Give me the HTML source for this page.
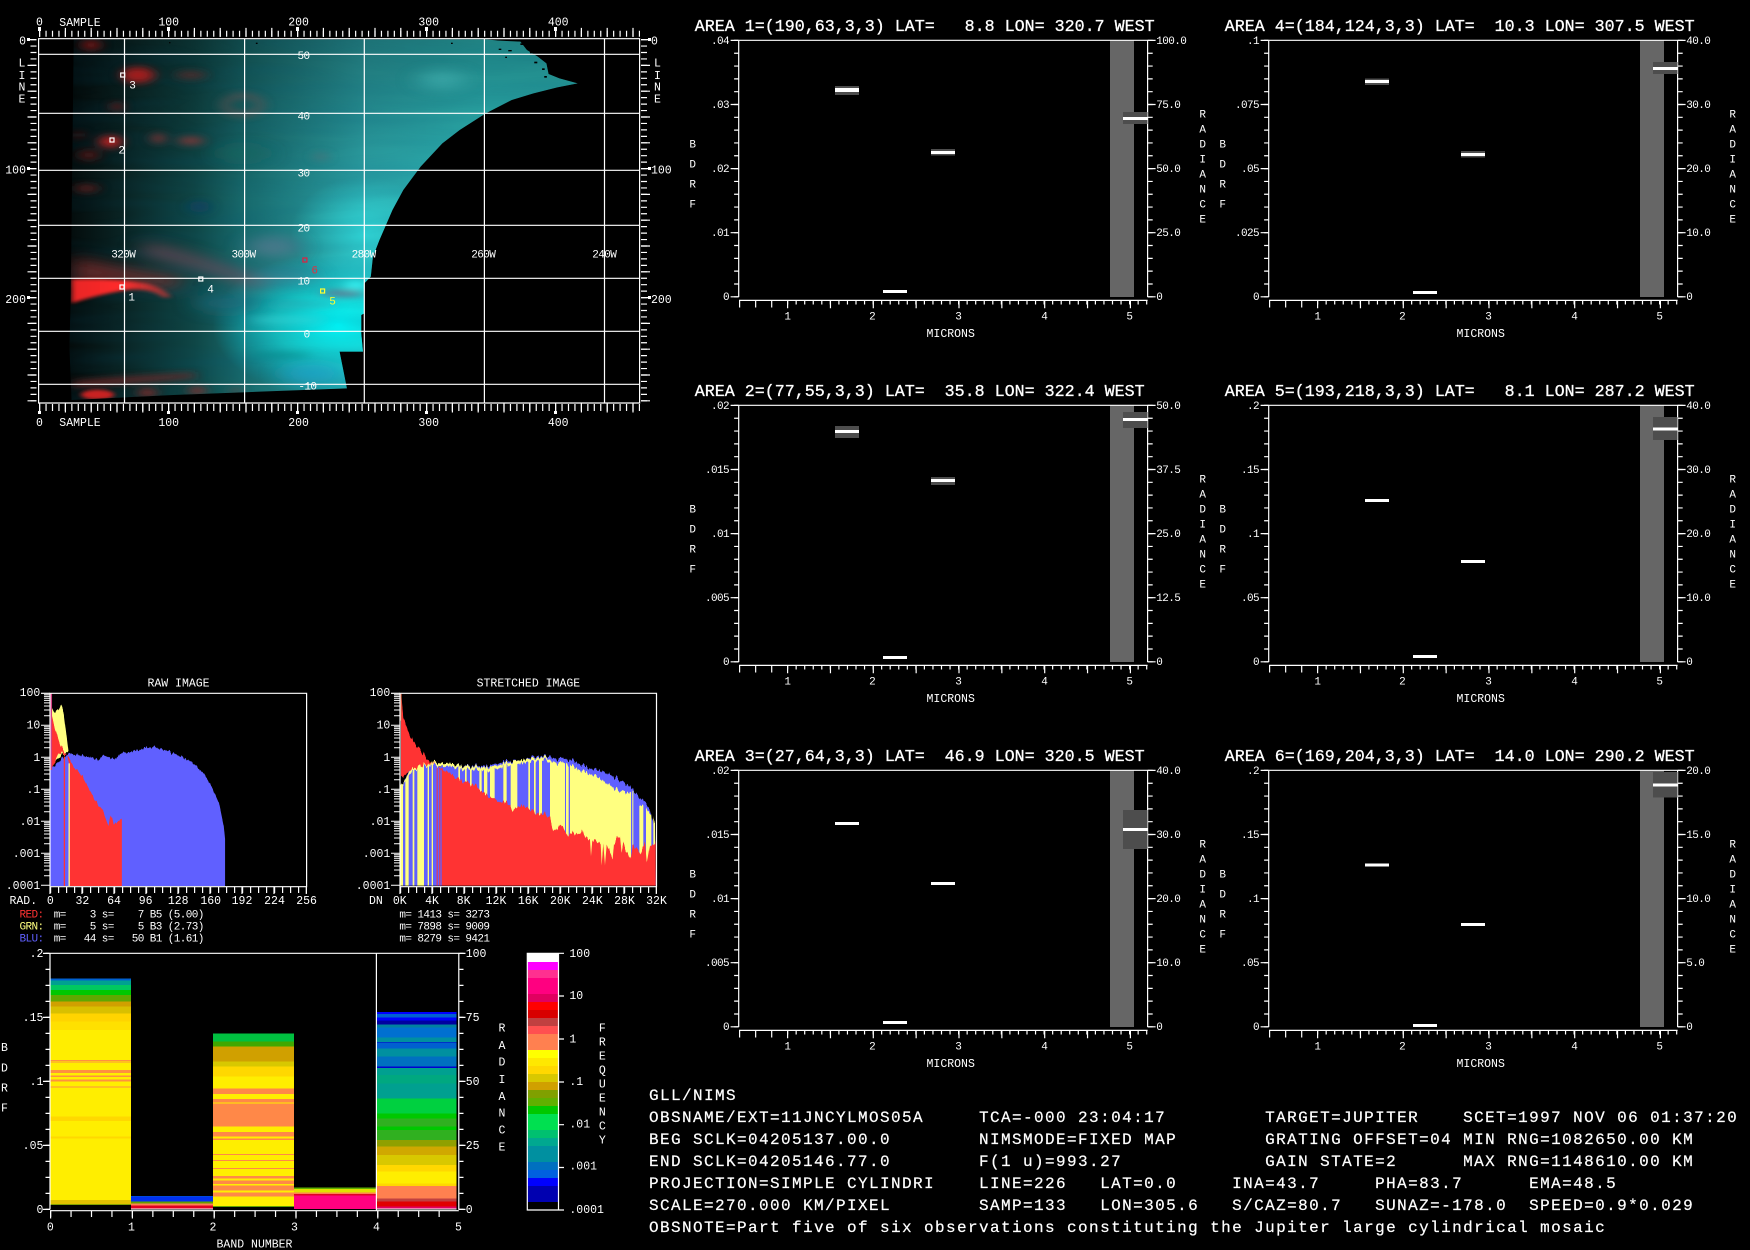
<!DOCTYPE html>
<html><head><meta charset="utf-8"><title>GLL/NIMS</title>
<style>
html,body{margin:0;padding:0;background:#000;width:1750px;height:1250px;overflow:hidden}
svg{display:block}
text{font-family:"Liberation Mono","DejaVu Sans Mono",monospace;fill:#fff;white-space:pre}
.s text,text.s{font-size:11px;letter-spacing:-.6px}
.m text,text.m{font-size:11.5px}
.t text{font-size:16.67px;stroke:#fff;stroke-width:.3px}
.n text{font-size:16px;letter-spacing:1.4px;stroke:#fff;stroke-width:.2px}
.e{text-anchor:end}.c{text-anchor:middle}
.w{stroke:#fff;fill:none}
</style></head><body>
<svg xmlns="http://www.w3.org/2000/svg" width="1750" height="1250" viewBox="0 0 1750 1250">
<defs>
<linearGradient id="gx" gradientUnits="userSpaceOnUse" x1="160" x2="1120" y1="0" y2="0">
<stop offset="0" stop-color="#040c0c"/><stop offset=".14" stop-color="#0a2626"/><stop offset=".3" stop-color="#0f4646"/><stop offset=".42" stop-color="#186a6c"/><stop offset=".7" stop-color="#2ca4a8"/><stop offset="1" stop-color="#2ebcbc"/></linearGradient>
<linearGradient id="gy" gradientUnits="userSpaceOnUse" x1="0" x2="0" y1="118" y2="600">
<stop offset="0" stop-color="#000" stop-opacity=".3"/><stop offset="1" stop-color="#000" stop-opacity="0"/></linearGradient>
<radialGradient id="gc" gradientUnits="userSpaceOnUse" cx="0" cy="0" r="1" gradientTransform="translate(780,975) scale(290,220)">
<stop offset="0" stop-color="#00ffff" stop-opacity=".98"/><stop offset=".5" stop-color="#10e8e8" stop-opacity=".6"/><stop offset="1" stop-color="#00d8f0" stop-opacity="0"/></radialGradient>
<radialGradient id="gb" gradientUnits="userSpaceOnUse" cx="0" cy="0" r="1" gradientTransform="translate(840,700) scale(170,170)">
<stop offset="0" stop-color="#30e8e8" stop-opacity=".7"/><stop offset="1" stop-color="#30e8e8" stop-opacity="0"/></radialGradient>
<clipPath id="mapc"><path d="M170 118L1120 118L1150 122L1200 125L1215 150L1240 170L1260 190L1265 222L1290 235L1332 250L1285 262L1230 280L1180 300L1120 340L1060 390L1020 430L970 500L930 570L905 630L885 690L875 720L860 770L855 830L840 850L840 940L833 945L833 1000L837 1055L783 1055L800 1165L600 1175L400 1185L165 1200L160 1040L163 900Z"/></clipPath>
<filter id="b1" x="-5%" y="-5%" width="110%" height="110%"><feGaussianBlur stdDeviation="14 10"/></filter>
<filter id="b2" x="-5%" y="-5%" width="110%" height="110%"><feGaussianBlur stdDeviation="7 5"/></filter>
<filter id="b3" x="-5%" y="-5%" width="110%" height="110%"><feGaussianBlur stdDeviation="26 18"/></filter>
<filter id="tex" x="0" y="0" width="100%" height="100%"><feTurbulence type="fractalNoise" baseFrequency=".003 .02" numOctaves="2" seed="7"/><feColorMatrix values="0 0 0 0 0  0 0 0 0 .1  0 0 0 0 .2  1.3 0 0 0 -.45"/></filter>
<filter id="jagS" x="-5%" y="-5%" width="110%" height="110%" color-interpolation-filters="sRGB"><feTurbulence type="fractalNoise" baseFrequency=".13 .0005" numOctaves="2" seed="3" result="n"/><feColorMatrix in="n" values="1 0 0 0 0  0 0 0 0 .5  0 0 1 0 0  0 0 0 0 1" result="m"/><feDisplacementMap in="SourceGraphic" in2="m" scale="32" xChannelSelector="G" yChannelSelector="R"/></filter>
<filter id="jagR" x="-5%" y="-5%" width="110%" height="110%" color-interpolation-filters="sRGB"><feTurbulence type="fractalNoise" baseFrequency=".17 .0005" numOctaves="2" seed="9" result="n"/><feColorMatrix in="n" values="1 0 0 0 0  0 0 0 0 .5  0 0 1 0 0  0 0 0 0 1" result="m"/><feDisplacementMap in="SourceGraphic" in2="m" scale="24" xChannelSelector="G" yChannelSelector="R"/></filter>
<clipPath id="yc"><path d="M35 290L60 240L90 220L130 215L200 225L250 232L300 230L350 220L390 210L430 205L470 200L480 215L530 220L560 235L620 260L680 300L720 310L745 305L748 345L780 365L795 395L797 605L30 605L30 290Z"/></clipPath>
<clipPath id="hs"><rect x="0" y="0" width="830" height="587"/></clipPath>
<clipPath id="hr"><rect x="0" y="0" width="760" height="648"/></clipPath>
<linearGradient id="rs" gradientUnits="userSpaceOnUse" x1="165" x2="395" y1="0" y2="0"><stop offset="0" stop-color="#e82424"/><stop offset=".5" stop-color="#ff2c2c"/><stop offset=".72" stop-color="#c83030"/><stop offset="1" stop-color="#803838"/></linearGradient>
<g id="dec" class="w" stroke-width="1"><path d="M-6 1.4H0M-6 3.1H0M-6 5H0M-6 7.1H0M-6 9.6H0M-6 12.7H0M-6 16.7H0M-6 22.4H0M-9 32H0"/></g>
<g id="pf">
<rect x="1110" y="40.3" width="24" height="256.7" fill="#666"/>
<path class="w" stroke-width="1.2" d="M738.7 40.3H1147.6M738.7 40.3V297M1147.6 40.3V297M739 300.4H1147.6"/>
<g class="w">
<line x1="736.4" y1="39.8" x2="736.4" y2="298" stroke-width="4.6" stroke-dasharray="1.2 11.62"/>
<line x1="734.6" y1="39.8" x2="734.6" y2="298" stroke-width="8" stroke-dasharray="1.2 62.9"/>
<line x1="1150.2" y1="39.8" x2="1150.2" y2="298" stroke-width="5" stroke-dasharray="1.2 11.62"/>
<line x1="1151.6" y1="39.8" x2="1151.6" y2="298" stroke-width="8" stroke-dasharray="1.2 62.9"/>
<line x1="787" y1="302.5" x2="1148" y2="302.5" stroke-width="4" stroke-dasharray="1.2 7.35"/>
<line x1="787" y1="304.3" x2="1148" y2="304.3" stroke-width="8" stroke-dasharray="1.2 41.65"/>
<line x1="739" y1="304" x2="780" y2="304" stroke-width="7" stroke-dasharray="1.2 14.85"/>
</g>
<g class="s c">
<text x="787.4" y="319.7">1</text><text x="872.1" y="319.7">2</text><text x="958.2" y="319.7">3</text><text x="1044.3" y="319.7">4</text><text x="1129.4" y="319.7">5</text>
<text x="692.4" y="147.4">B</text><text x="692.4" y="167.4">D</text><text x="692.4" y="187.4">R</text><text x="692.4" y="207.4">F</text>
<text x="1202.4" y="117.4">R</text><text x="1202.4" y="132.4">A</text><text x="1202.4" y="147.4">D</text><text x="1202.4" y="162.4">I</text><text x="1202.4" y="177.4">A</text><text x="1202.4" y="192.4">N</text><text x="1202.4" y="207.4">C</text><text x="1202.4" y="222.4">E</text>
</g>
<text class="m c" x="950.7" y="337">MICRONS</text>
</g>
</defs>
<rect width="1750" height="1250" fill="#000"/>

<!-- map image -->
<g transform="scale(.43366,.33333)">
<g clip-path="url(#mapc)">
<rect x="150" y="110" width="1200" height="1100" fill="url(#gx)"/>
<rect x="150" y="110" width="1200" height="600" fill="url(#gy)"/>
<rect x="150" y="500" width="1200" height="710" fill="url(#gc)"/>
<rect x="150" y="450" width="1200" height="500" fill="url(#gb)"/>
<rect x="150" y="110" width="1200" height="1100" filter="url(#tex)" opacity=".22"/>
<g filter="url(#b3)">
<path d="M170 770Q300 810 420 830L400 870Q280 840 170 850Z" fill="#7c2c2c" opacity=".75"/>
<path d="M330 725Q450 755 620 845L600 870Q450 800 330 765Z" fill="#784858" opacity=".7"/>
<ellipse cx="560" cy="460" rx="60" ry="22" fill="#1a6a60" opacity=".7"/>
<ellipse cx="520" cy="910" rx="70" ry="28" fill="#1a6a7a" opacity=".7"/>
<ellipse cx="630" cy="740" rx="60" ry="30" fill="#587a90" opacity=".75"/>
<ellipse cx="650" cy="830" rx="80" ry="24" fill="#3a7a90" opacity=".6"/>
<ellipse cx="1020" cy="240" rx="55" ry="25" fill="#48b8b8" opacity=".6"/>
<ellipse cx="720" cy="1120" rx="70" ry="26" fill="#20a0c8" opacity=".75"/>
</g>
<g filter="url(#b1)">
<ellipse cx="650" cy="1065" rx="70" ry="7" fill="#108080" opacity=".7"/>
<ellipse cx="660" cy="960" rx="90" ry="8" fill="#40e0e0" opacity=".6"/>
<ellipse cx="700" cy="915" rx="80" ry="7" fill="#30a8b0" opacity=".6"/>
<ellipse cx="460" cy="620" rx="24" ry="18" fill="#0a4060" opacity=".85"/>
<ellipse cx="740" cy="470" rx="14" ry="12" fill="#507078" opacity=".8"/>
<ellipse cx="318" cy="225" rx="38" ry="24" fill="#a01c1c"/>
<ellipse cx="210" cy="135" rx="22" ry="16" fill="#701818"/>
<ellipse cx="440" cy="225" rx="36" ry="12" fill="#5c2a2a" opacity=".8"/>
<ellipse cx="270" cy="320" rx="13" ry="12" fill="#701c1c"/>
<ellipse cx="255" cy="425" rx="26" ry="18" fill="#b82020"/>
<ellipse cx="365" cy="415" rx="15" ry="15" fill="#7c3030"/>
<ellipse cx="440" cy="422" rx="30" ry="12" fill="#7c3838"/>
<ellipse cx="182" cy="405" rx="11" ry="9" fill="#581818"/>
<ellipse cx="205" cy="465" rx="24" ry="16" fill="#481818"/>
<ellipse cx="200" cy="565" rx="28" ry="11" fill="#581f1f"/>
<ellipse cx="560" cy="315" rx="42" ry="28" fill="none" stroke="#785050" stroke-width="12" opacity=".75"/>
<ellipse cx="340" cy="1178" rx="20" ry="12" fill="#8c2525"/>
<ellipse cx="455" cy="1172" rx="18" ry="12" fill="#8c2a2a"/>
<ellipse cx="545" cy="1172" rx="12" ry="9" fill="#604040"/>
<ellipse cx="790" cy="880" rx="50" ry="9" fill="#786080" opacity=".85"/>
<ellipse cx="820" cy="855" rx="26" ry="12" fill="#40ffff" opacity=".8"/>
<path d="M170 1145Q300 1130 450 1120L450 1132Q300 1150 170 1160Z" fill="#702525"/>
</g>
<g filter="url(#b2)">
<path d="M165 838Q260 835 340 850Q380 865 395 892L375 892Q350 865 300 868Q220 885 165 910Z" fill="url(#rs)"/>
<ellipse cx="225" cy="1184" rx="38" ry="15" fill="#c82020"/>
</g>
</g>
<!-- speckle on upper right -->
<g fill="#000"><rect x="1150" y="146" width="6" height="4"/><rect x="1172" y="150" width="8" height="4"/><rect x="1200" y="130" width="7" height="5"/><rect x="1212" y="140" width="6" height="4"/><rect x="1222" y="155" width="7" height="5"/><rect x="1232" y="185" width="7" height="5"/><rect x="1250" y="205" width="6" height="5"/><rect x="1255" y="228" width="6" height="5"/><rect x="1165" y="170" width="4" height="4"/><rect x="1040" y="128" width="4" height="4"/><rect x="590" y="128" width="4" height="4"/><rect x="390" y="126" width="3" height="4"/></g>
</g>

<!-- map frame & grid -->
<path class="w" stroke-width="1.2" d="M38.6 38.7H639.6V403H38.6ZM124.5 38.7V403M244.6 38.7V403M364.3 38.7V403M484.4 38.7V403M604.5 38.7V403M38.6 54.3H639.6M38.6 113.3H639.6M38.6 170.3H639.6M38.6 225.3H639.6M38.6 278.3H639.6M38.6 331.3H639.6M38.6 384.3H639.6"/>
<g class="w">
<line x1="39" y1="33.7" x2="640" y2="33.7" stroke-width="6" stroke-dasharray="1.2 5.25"/>
<line x1="39" y1="32.4" x2="640" y2="32.4" stroke-width="9" stroke-dasharray="1.2 24.6"/>
<line x1="39" y1="407.5" x2="640" y2="407.5" stroke-width="7" stroke-dasharray="1.2 5.25"/>
<line x1="39" y1="408" x2="640" y2="408" stroke-width="9" stroke-dasharray="1.2 24.6"/>
<line x1="33.5" y1="39" x2="33.5" y2="403" stroke-width="6" stroke-dasharray="1.2 5.25"/>
<line x1="32" y1="39" x2="32" y2="403" stroke-width="9" stroke-dasharray="1.2 24.6"/>
<line x1="644" y1="39" x2="644" y2="403" stroke-width="6" stroke-dasharray="1.2 5.25"/>
<line x1="645.5" y1="39" x2="645.5" y2="403" stroke-width="9" stroke-dasharray="1.2 24.6"/>
</g>
<g fill="#fff"><rect x="38" y="27" width="3" height="4"/><rect x="167" y="27" width="3" height="4"/><rect x="296" y="27" width="3" height="4"/><rect x="425" y="27" width="3" height="4"/><rect x="554" y="27" width="3" height="4"/>
<rect x="38" y="411" width="3" height="3"/><rect x="167" y="411" width="3" height="3"/><rect x="296" y="411" width="3" height="3"/><rect x="425" y="411" width="3" height="3"/><rect x="554" y="411" width="3" height="3"/>
<rect x="27" y="38" width="3" height="3"/><rect x="27" y="167" width="3" height="3"/><rect x="27" y="296" width="3" height="3"/><rect x="648" y="38" width="3" height="3"/><rect x="648" y="167" width="3" height="3"/><rect x="648" y="296" width="3" height="3"/></g>
<g class="m">
<text x="59.3" y="26">SAMPLE</text><text x="59.3" y="426">SAMPLE</text>
<g class="c">
<text x="39.5" y="25.5">0</text><text x="168.7" y="25.5">100</text><text x="298.6" y="25.5">200</text><text x="428.7" y="25.5">300</text><text x="558.2" y="25.5">400</text>
<text x="39.5" y="426">0</text><text x="168.7" y="426">100</text><text x="298.6" y="426">200</text><text x="428.7" y="426">300</text><text x="558.2" y="426">400</text>
<text x="22" y="66.5">L</text><text x="22" y="79">I</text><text x="22" y="90.5">N</text><text x="22" y="102.5">E</text>
<text x="657.4" y="66.5">L</text><text x="657.4" y="79">I</text><text x="657.4" y="90.5">N</text><text x="657.4" y="102.5">E</text>
</g>
<g class="e"><text x="26" y="44.5">0</text><text x="26" y="173.5">100</text><text x="26" y="303">200</text></g>
<text x="651" y="44.5">0</text><text x="651" y="173.5">100</text><text x="651" y="303">200</text>
</g>
<g class="s c">
<text x="303.5" y="59">50</text><text x="303.5" y="119.4">40</text><text x="303.5" y="176.4">30</text><text x="303.5" y="231.4">20</text><text x="303.5" y="284.4">10</text><text x="306.6" y="337.4">0</text><text x="307.4" y="389.4">-10</text>
<text x="123.3" y="257.4">320W</text><text x="243.5" y="257.4">300W</text><text x="363.6" y="257.4">280W</text><text x="483.3" y="257.4">260W</text><text x="604.3" y="257.4">240W</text>
<text x="131.4" y="300.6">1</text><text x="121.4" y="153.6">2</text><text x="132.3" y="88.6">3</text><text x="210.3" y="292.6">4</text>
<text x="332.2" y="304.6" style="fill:#ffff30">5</text><text x="314.4" y="273.6" style="fill:#e03040">6</text>
</g>
<g fill="none" stroke-width="1.2">
<rect x="120" y="285" width="4" height="4" stroke="#fff"/><rect x="110" y="138" width="4" height="4" stroke="#fff"/><rect x="120.7" y="73" width="4" height="4" stroke="#fff"/><rect x="198.8" y="277" width="4" height="4" stroke="#fff"/><rect x="320.6" y="289" width="4" height="4" stroke="#ffff30"/><rect x="302.9" y="258" width="4" height="4" stroke="#e02040"/>
</g>

<!-- RAW histogram -->
<g transform="translate(0,670) scale(.43366,.33333)">
<g clip-path="url(#hr)"><g filter="url(#jagR)">
<path fill="#6060ff" d="M115 670L115 300L122 290L160 250L190 258L230 268L240 255L265 268L280 250L320 240L350 230L370 235L400 250L440 272L470 310L490 355L505 400L516 470L519 510L519 670Z"/>
<path fill="#ffff80" d="M118 115L125 125L135 120L140 103L147 130L158 245L150 250L120 280Z"/>
<path fill="#ff3333" d="M118 130L128 180L140 230L158 262L170 290L190 320L210 370L240 430L250 465L255 432L262 462L275 455L281 445L281 670L160 670L160 290L155 255L135 250L118 300Z"/>
</g></g>
<rect x="115" y="70" width="5" height="230" fill="#d04080"/>
<rect x="147" y="260" width="3" height="388" fill="#ff3333"/>
<rect x="158" y="280" width="3" height="368" fill="#ffff90"/>
</g>
<path class="w" stroke-width="1.2" d="M50 693.3H306.6V886.7H50ZM50 886.7V894M82 886.7V894M114 886.7V894M146 886.7V894M178 886.7V894M210 886.7V894M242 886.7V894M274 886.7V894M306.3 886.7V894"/>
<line class="w" x1="50" y1="890" x2="307" y2="890" stroke-width="6" stroke-dasharray="1.2 6.8"/>
<use href="#dec" x="50" y="693.3"/><use href="#dec" x="50" y="725.3"/><use href="#dec" x="50" y="757.3"/><use href="#dec" x="50" y="789.3"/><use href="#dec" x="50" y="821.3"/><use href="#dec" x="50" y="853.3"/>
<path class="w" stroke-width="1.2" d="M41 693.3H50"/>

<!-- STRETCHED histogram -->
<g transform="translate(390,690) scale(.33333)">
<g clip-path="url(#hs)"><g filter="url(#jagS)">
<path fill="#6060ff" d="M30 605L35 290L60 235L90 220L120 215L150 228L200 225L250 230L300 225L350 215L400 210L430 200L470 198L490 205L515 205L550 212L600 235L640 245L680 265L720 290L745 320L780 355L795 430L798 605Z"/>
<g clip-path="url(#yc)" fill="#ffff80">
<rect x="30" y="0" width="9" height="605"/><rect x="46" y="0" width="10" height="605"/><rect x="68" y="0" width="5" height="605"/><rect x="82" y="0" width="20" height="605"/><rect x="113" y="0" width="4" height="605"/><rect x="125" y="0" width="4" height="605"/>
<rect x="205" y="0" width="5" height="605"/><rect x="225" y="0" width="5" height="605"/><rect x="240" y="0" width="5" height="605"/><rect x="268" y="0" width="7" height="605"/><rect x="282" y="0" width="10" height="605"/><rect x="300" y="0" width="14" height="605"/><rect x="340" y="0" width="10" height="605"/><rect x="362" y="0" width="20" height="605"/><rect x="415" y="0" width="5" height="605"/><rect x="432" y="0" width="5" height="605"/><rect x="447" y="0" width="9" height="605"/>
<rect x="480" y="0" width="45" height="605"/><rect x="528" y="0" width="8" height="605"/><rect x="540" y="0" width="183" height="605"/><rect x="727" y="0" width="3" height="605"/><rect x="748" y="0" width="12" height="605"/><rect x="768" y="0" width="16" height="605"/><rect x="790" y="0" width="8" height="605"/>
<path d="M30 290L60 240L90 220L130 215L200 225L250 232L300 230L350 220L390 210L430 205L470 200L480 215L480 224L470 208L430 214L390 220L350 229L300 240L250 242L200 234L130 224L90 230L60 250L30 300Z"/>
</g>
<path fill="#ff3333" d="M33 12L40 80L60 140L90 180L120 215L150 232L200 265L250 285L300 320L330 335L360 345L370 365L385 350L400 345L420 360L440 370L465 372L480 385L490 425L505 405L520 415L530 435L545 430L570 430L575 415L582 440L600 445L603 495L607 450L632 462L635 525L640 462L645 522L650 462L668 510L672 462L690 435L695 490L700 462L722 510L728 470L745 480L752 495L765 462L770 520L780 460L790 470L797 450L797 605L155 605L155 240L130 218L100 225L60 240L35 265L33 265Z"/>
</g></g>
<rect x="140" y="235" width="3" height="352" fill="#ff3333"/><rect x="148" y="235" width="3" height="352" fill="#ff3333"/>
<rect x="30" y="12" width="5" height="80" fill="#d06040"/>
</g>
<path class="w" stroke-width="1.2" d="M400 693.3H656.5V886.7H400ZM400 886.7V894M432 886.7V894M464 886.7V894M496 886.7V894M528 886.7V894M560 886.7V894M592 886.7V894M624 886.7V894M656.3 886.7V894"/>
<line class="w" x1="400" y1="890" x2="657" y2="890" stroke-width="6" stroke-dasharray="1.2 6.8"/>
<use href="#dec" x="400" y="693.3"/><use href="#dec" x="400" y="725.3"/><use href="#dec" x="400" y="757.3"/><use href="#dec" x="400" y="789.3"/><use href="#dec" x="400" y="821.3"/><use href="#dec" x="400" y="853.3"/>
<path class="w" stroke-width="1.2" d="M391 693.3H400"/>

<text class="m c" x="178.5" y="686.5">RAW IMAGE</text><text class="m c" x="528.4" y="686.5">STRETCHED IMAGE</text>
<g class="m e">
<text x="40.3" y="696.2">100</text><text x="40.3" y="728.5">10</text><text x="40.3" y="760.8">1</text><text x="40.3" y="792.8">.1</text><text x="40.3" y="824.8">.01</text><text x="40.3" y="856.8">.001</text><text x="40.3" y="888.8">.0001</text>
<text x="390.3" y="696.2">100</text><text x="390.3" y="728.5">10</text><text x="390.3" y="760.8">1</text><text x="390.3" y="792.8">.1</text><text x="390.3" y="824.8">.01</text><text x="390.3" y="856.8">.001</text><text x="390.3" y="888.8">.0001</text>
</g>
<g class="m"><text x="9.5" y="904">RAD.</text><text x="369" y="904">DN</text></g>
<g class="m c">
<text x="50.3" y="904">0</text><text x="82.4" y="904">32</text><text x="114" y="904">64</text><text x="145.7" y="904">96</text><text x="178.2" y="904">128</text><text x="210.7" y="904">160</text><text x="242" y="904">192</text><text x="274.5" y="904">224</text><text x="306.6" y="904">256</text>
<text x="399.8" y="904">0K</text><text x="432" y="904">4K</text><text x="463.6" y="904">8K</text><text x="496" y="904">12K</text><text x="528.2" y="904">16K</text><text x="560.3" y="904">20K</text><text x="592.4" y="904">24K</text><text x="624.5" y="904">28K</text><text x="656.5" y="904">32K</text>
</g>
<g class="s">
<text x="19.5" y="917.5" style="fill:#ff3333">RED:</text><text x="47.7" y="917.5"> m=    3 s=    7 B5 (5.00)</text>
<text x="19.5" y="929.5" style="fill:#ffff80">GRN:</text><text x="47.7" y="929.5"> m=    5 s=    5 B3 (2.73)</text>
<text x="19.5" y="941.5" style="fill:#6060ff">BLU:</text><text x="47.7" y="941.5"> m=   44 s=   50 B1 (1.61)</text>
<text x="399.4" y="917.5">m= 1413 s= 3273</text><text x="399.4" y="929.5">m= 7898 s= 9009</text><text x="399.4" y="941.5">m= 8279 s= 9421</text>
</g>

<!-- BAND plot -->
<g transform="translate(40,950) scale(.33333)" shape-rendering="crispEdges">
<rect x="30" y="85" width="243" height="680" fill="#ffee00"/>
<rect x="30" y="85" width="243" height="7" fill="#0060d0"/><rect x="30" y="92" width="243" height="13" fill="#00a090"/><rect x="30" y="105" width="243" height="15" fill="#00c860"/><rect x="30" y="120" width="243" height="15" fill="#00c800"/><rect x="30" y="135" width="243" height="20" fill="#60a800"/><rect x="30" y="155" width="243" height="15" fill="#d0a000"/><rect x="30" y="170" width="243" height="20" fill="#d8c000"/><rect x="30" y="190" width="243" height="25" fill="#ffd400"/><rect x="30" y="215" width="243" height="25" fill="#ffe000"/>
<g fill="#ff9040"><rect x="30" y="330" width="243" height="4"/><rect x="30" y="337" width="243" height="2"/><rect x="30" y="360" width="243" height="9"/><rect x="30" y="377" width="243" height="4"/><rect x="30" y="389" width="243" height="6"/><rect x="30" y="410" width="243" height="3"/></g>
<rect x="30" y="500" width="243" height="13" fill="#ffd800"/><rect x="30" y="560" width="243" height="5" fill="#ffd800"/><rect x="30" y="750" width="243" height="12" fill="#e0c000"/><rect x="30" y="762" width="243" height="3" fill="#80a000"/>

<rect x="273" y="738" width="246" height="2" fill="#0060d0"/><rect x="273" y="740" width="246" height="15" fill="#0030f0"/><rect x="273" y="755" width="246" height="5" fill="#60a000"/><rect x="273" y="760" width="246" height="7" fill="#ff8050"/><rect x="273" y="767" width="246" height="8" fill="#e00020"/><rect x="273" y="775" width="246" height="3" fill="#fff"/>

<rect x="519" y="250" width="243" height="521" fill="#ffee00"/>
<rect x="519" y="250" width="243" height="25" fill="#00c040"/><rect x="519" y="275" width="243" height="15" fill="#40a800"/><rect x="519" y="290" width="243" height="45" fill="#d0a000"/><rect x="519" y="335" width="243" height="15" fill="#d8c800"/><rect x="519" y="350" width="243" height="30" fill="#ffd800"/>
<g fill="#ff8848"><rect x="519" y="415" width="243" height="17"/><rect x="519" y="447" width="243" height="10"/><rect x="519" y="460" width="243" height="70"/><rect x="519" y="546" width="243" height="14"/><rect x="519" y="565" width="243" height="5"/><rect x="519" y="612" width="243" height="3"/><rect x="519" y="630" width="243" height="3"/><rect x="519" y="654" width="243" height="3"/><rect x="519" y="678" width="243" height="8"/><rect x="519" y="692" width="243" height="10"/><rect x="519" y="706" width="243" height="16"/><rect x="519" y="728" width="243" height="12"/></g>
<rect x="519" y="768" width="243" height="3" fill="#60a000"/>

<rect x="762" y="712" width="260" height="5" fill="#60b000"/><rect x="762" y="717" width="260" height="11" fill="#e0e000"/><rect x="762" y="728" width="260" height="4" fill="#ff8050"/><rect x="762" y="732" width="260" height="4" fill="#e00020"/><rect x="762" y="736" width="260" height="41" fill="#ff0080"/>
</g>
<g transform="translate(290,950) scale(.33333)" shape-rendering="crispEdges">
<rect x="260" y="186" width="240" height="6" fill="#0000ff"/><rect x="260" y="192" width="240" height="10" fill="#0060d0"/><rect x="260" y="202" width="240" height="10" fill="#0000ff"/><rect x="260" y="212" width="240" height="12" fill="#0000a0"/><rect x="260" y="224" width="240" height="8" fill="#0080a0"/><rect x="260" y="232" width="240" height="30" fill="#0070d0"/><rect x="260" y="262" width="240" height="14" fill="#0090a0"/><rect x="260" y="276" width="240" height="2" fill="#0000c0"/><rect x="260" y="278" width="240" height="17" fill="#0060d0"/><rect x="260" y="295" width="240" height="25" fill="#0090a0"/><rect x="260" y="320" width="240" height="30" fill="#0070c0"/><rect x="260" y="350" width="240" height="4" fill="#0000d0"/><rect x="260" y="354" width="240" height="21" fill="#00a090"/><rect x="260" y="375" width="240" height="25" fill="#00a880"/><rect x="260" y="400" width="240" height="45" fill="#00a090"/><rect x="260" y="445" width="240" height="45" fill="#00d040"/><rect x="260" y="490" width="240" height="15" fill="#00c800"/><rect x="260" y="505" width="240" height="25" fill="#30b020"/><rect x="260" y="530" width="240" height="10" fill="#00c800"/><rect x="260" y="540" width="240" height="30" fill="#30b020"/><rect x="260" y="570" width="240" height="20" fill="#90a000"/><rect x="260" y="590" width="240" height="25" fill="#d0a800"/><rect x="260" y="615" width="240" height="30" fill="#d8c800"/><rect x="260" y="645" width="240" height="20" fill="#ffd800"/><rect x="260" y="665" width="240" height="35" fill="#ffee00"/><rect x="260" y="700" width="240" height="8" fill="#ffd800"/><rect x="260" y="708" width="240" height="37" fill="#ff8050"/><rect x="260" y="745" width="240" height="10" fill="#c04040"/><rect x="260" y="755" width="240" height="15" fill="#e00000"/><rect x="260" y="770" width="240" height="5" fill="#e00060"/><rect x="260" y="775" width="240" height="3" fill="#fff"/>
<!-- colour bar -->
<rect x="712" y="10" width="92" height="26" fill="#fff"/><rect x="712" y="36" width="92" height="24" fill="#ff00ff"/><rect x="712" y="60" width="92" height="24" fill="#ff3090"/><rect x="712" y="84" width="92" height="48" fill="#ff0080"/><rect x="712" y="132" width="92" height="24" fill="#e00060"/><rect x="712" y="156" width="92" height="24" fill="#ff0000"/><rect x="712" y="180" width="92" height="24" fill="#d80000"/><rect x="712" y="204" width="92" height="24" fill="#c04040"/><rect x="712" y="228" width="92" height="24" fill="#ff5050"/><rect x="712" y="252" width="92" height="48" fill="#ff8050"/><rect x="712" y="300" width="92" height="24" fill="#ffff00"/><rect x="712" y="324" width="92" height="24" fill="#ffe800"/><rect x="712" y="348" width="92" height="24" fill="#ffd800"/><rect x="712" y="372" width="92" height="24" fill="#d8c800"/><rect x="712" y="396" width="92" height="24" fill="#d0a000"/><rect x="712" y="420" width="92" height="24" fill="#80a000"/><rect x="712" y="444" width="92" height="24" fill="#60b000"/><rect x="712" y="468" width="92" height="24" fill="#00c800"/><rect x="712" y="492" width="92" height="48" fill="#00e050"/><rect x="712" y="540" width="92" height="24" fill="#00c070"/><rect x="712" y="564" width="92" height="24" fill="#00a890"/><rect x="712" y="588" width="92" height="48" fill="#0090a0"/><rect x="712" y="636" width="92" height="24" fill="#0070c0"/><rect x="712" y="660" width="92" height="24" fill="#0060e0"/><rect x="712" y="684" width="92" height="24" fill="#0000ff"/><rect x="712" y="708" width="92" height="48" fill="#0000b0"/>
</g>
<path class="w" stroke-width="1.2" d="M50 953.3H458.8M50 953.3V1209.5M458.8 953.3V1209.5M376.4 953.3V1210.7M50 1210.7H458.8M527.3 953.3H558.5V1210H527.3ZM558.5 953.3H564M558.5 996H564M558.5 1039H564M558.5 1082H564M558.5 1124.7H564M558.5 1167.5H564M558.5 1210H564"/>
<g class="w">
<line x1="47.5" y1="952.8" x2="47.5" y2="1211" stroke-width="4" stroke-dasharray="1.2 14.8"/>
<line x1="46.5" y1="952.8" x2="46.5" y2="1211" stroke-width="7" stroke-dasharray="1.2 62.8"/>
<line x1="461.5" y1="952.8" x2="461.5" y2="1211" stroke-width="4" stroke-dasharray="1.2 14.8"/>
<line x1="462" y1="952.8" x2="462" y2="1211" stroke-width="7" stroke-dasharray="1.2 62.8"/>
<line x1="50" y1="1214" x2="459" y2="1214" stroke-width="6" stroke-dasharray="1.2 19.25"/>
<line x1="50" y1="1214.5" x2="459" y2="1214.5" stroke-width="8" stroke-dasharray="1.2 80.6"/>
</g>
<g class="m e">
<text x="43.4" y="957">.2</text><text x="43.4" y="1021">.15</text><text x="43.4" y="1085">.1</text><text x="43.4" y="1149">.05</text><text x="43.4" y="1213">0</text>
</g>
<g class="m">
<text x="465.7" y="957">100</text><text x="465.7" y="1021">75</text><text x="465.7" y="1085">50</text><text x="465.7" y="1149">25</text><text x="465.7" y="1213">0</text>
<text x="569.4" y="957">100</text><text x="569.4" y="999">10</text><text x="569.4" y="1042.5">1</text><text x="569.4" y="1085">.1</text><text x="569.4" y="1127.5">.01</text><text x="569.4" y="1169.5">.001</text><text x="569.4" y="1213">.0001</text>
</g>
<g class="m c">
<text x="50.3" y="1230.5">0</text><text x="131.4" y="1230.5">1</text><text x="213" y="1230.5">2</text><text x="294.4" y="1230.5">3</text><text x="376.4" y="1230.5">4</text><text x="458.4" y="1230.5">5</text>
<text x="254.5" y="1247.5">BAND NUMBER</text>
<text x="4.5" y="1051">B</text><text x="4.5" y="1071.5">D</text><text x="4.5" y="1091.5">R</text><text x="4.5" y="1111.5">F</text>
<text x="502" y="1031.5">R</text><text x="502" y="1049">A</text><text x="502" y="1065.5">D</text><text x="502" y="1083">I</text><text x="502" y="1100">A</text><text x="502" y="1116.5">N</text><text x="502" y="1133.5">C</text><text x="502" y="1150.5">E</text>
<text x="602.3" y="1031.5">F</text><text x="602.3" y="1045.5">R</text><text x="602.3" y="1059.5">E</text><text x="602.3" y="1073.5">Q</text><text x="602.3" y="1087.5">U</text><text x="602.3" y="1101.5">E</text><text x="602.3" y="1115.5">N</text><text x="602.3" y="1129.5">C</text><text x="602.3" y="1143.5">Y</text>
</g>

<!-- six spectral panels -->
<use href="#pf"/><use href="#pf" x="530"/><use href="#pf" y="365"/><use href="#pf" x="530" y="365"/><use href="#pf" y="730"/><use href="#pf" x="530" y="730"/>
<g fill="#4d4d4d" shape-rendering="crispEdges">
<rect x="835" y="86" width="24" height="9"/><rect x="931" y="149" width="24" height="6.7"/><rect x="1122.8" y="112" width="24.8" height="12"/>
<rect x="1365" y="78.3" width="24" height="6.7"/><rect x="1461" y="151" width="24" height="6.7"/><rect x="1652.8" y="62" width="24.8" height="12"/>
<rect x="835" y="425.8" width="24" height="12"/><rect x="931" y="477" width="24" height="8"/><rect x="1122.8" y="412" width="24.8" height="16"/>
<rect x="1652.8" y="417" width="24.8" height="23"/>
<rect x="1122.8" y="810" width="24.8" height="39"/>
<rect x="1652.8" y="771.8" width="24.8" height="25.9"/>
</g>
<g fill="#fff" shape-rendering="crispEdges">
<rect x="835" y="88" width="24" height="4"/><rect x="883" y="290" width="24" height="3"/><rect x="931" y="151" width="24" height="3"/><rect x="1122.8" y="117" width="24.8" height="3"/>
<rect x="1365" y="80" width="24" height="3"/><rect x="1413" y="291" width="24" height="3"/><rect x="1461" y="153" width="24" height="3"/><rect x="1652.8" y="67" width="24.8" height="3"/>
<rect x="835" y="430" width="24" height="3"/><rect x="883" y="656" width="24" height="3"/><rect x="931" y="479" width="24" height="3"/><rect x="1122.8" y="418" width="24.8" height="3"/>
<rect x="1365" y="499" width="24" height="3"/><rect x="1413" y="655" width="24" height="3"/><rect x="1461" y="560" width="24" height="3"/><rect x="1652.8" y="427.6" width="24.8" height="3"/>
<rect x="835" y="822" width="24" height="3"/><rect x="883" y="1021" width="24" height="3"/><rect x="931" y="882" width="24" height="3"/><rect x="1122.8" y="828" width="24.8" height="3"/>
<rect x="1365" y="863.3" width="24" height="3"/><rect x="1413" y="1024" width="24" height="3"/><rect x="1461" y="923" width="24" height="3"/><rect x="1652.8" y="783.4" width="24.8" height="3"/>
</g>
<g class="t">
<text x="694.8" y="31">AREA 1=(190,63,3,3) LAT=   8.8 LON= 320.7 WEST</text>
<text x="1224.8" y="31">AREA 4=(184,124,3,3) LAT=  10.3 LON= 307.5 WEST</text>
<text x="694.8" y="396">AREA 2=(77,55,3,3) LAT=  35.8 LON= 322.4 WEST</text>
<text x="1224.8" y="396">AREA 5=(193,218,3,3) LAT=   8.1 LON= 287.2 WEST</text>
<text x="694.8" y="761">AREA 3=(27,64,3,3) LAT=  46.9 LON= 320.5 WEST</text>
<text x="1224.8" y="761">AREA 6=(169,204,3,3) LAT=  14.0 LON= 290.2 WEST</text>
</g>
<g class="s e">
<text x="729" y="44">.04</text><text x="729" y="108">.03</text><text x="729" y="172">.02</text><text x="729" y="236">.01</text><text x="729" y="300">0</text>
<text x="1259" y="44">.1</text><text x="1259" y="108">.075</text><text x="1259" y="172">.05</text><text x="1259" y="236">.025</text><text x="1259" y="300">0</text>
<text x="729" y="409">.02</text><text x="729" y="473">.015</text><text x="729" y="537">.01</text><text x="729" y="601">.005</text><text x="729" y="665">0</text>
<text x="1259" y="409">.2</text><text x="1259" y="473">.15</text><text x="1259" y="537">.1</text><text x="1259" y="601">.05</text><text x="1259" y="665">0</text>
<text x="729" y="774">.02</text><text x="729" y="838">.015</text><text x="729" y="902">.01</text><text x="729" y="966">.005</text><text x="729" y="1030">0</text>
<text x="1259" y="774">.2</text><text x="1259" y="838">.15</text><text x="1259" y="902">.1</text><text x="1259" y="966">.05</text><text x="1259" y="1030">0</text>
</g>
<g class="s">
<text x="1156.2" y="44">100.0</text><text x="1156.2" y="108">75.0</text><text x="1156.2" y="172">50.0</text><text x="1156.2" y="236">25.0</text><text x="1156.2" y="300">0</text>
<text x="1686.2" y="44">40.0</text><text x="1686.2" y="108">30.0</text><text x="1686.2" y="172">20.0</text><text x="1686.2" y="236">10.0</text><text x="1686.2" y="300">0</text>
<text x="1156.2" y="409">50.0</text><text x="1156.2" y="473">37.5</text><text x="1156.2" y="537">25.0</text><text x="1156.2" y="601">12.5</text><text x="1156.2" y="665">0</text>
<text x="1686.2" y="409">40.0</text><text x="1686.2" y="473">30.0</text><text x="1686.2" y="537">20.0</text><text x="1686.2" y="601">10.0</text><text x="1686.2" y="665">0</text>
<text x="1156.2" y="774">40.0</text><text x="1156.2" y="838">30.0</text><text x="1156.2" y="902">20.0</text><text x="1156.2" y="966">10.0</text><text x="1156.2" y="1030">0</text>
<text x="1686.2" y="774">20.0</text><text x="1686.2" y="838">15.0</text><text x="1686.2" y="902">10.0</text><text x="1686.2" y="966">5.0</text><text x="1686.2" y="1030">0</text>
</g>

<!-- notes -->
<g class="n">
<text x="649" y="1100">GLL/NIMS</text>
<text x="649" y="1122">OBSNAME/EXT=11JNCYLMOS05A     TCA=-000 23:04:17         TARGET=JUPITER    SCET=1997 NOV 06 01:37:20</text>
<text x="649" y="1144">BEG SCLK=04205137.00.0        NIMSMODE=FIXED MAP        GRATING OFFSET=04 MIN RNG=1082650.00 KM</text>
<text x="649" y="1166">END SCLK=04205146.77.0        F(1 u)=993.27             GAIN STATE=2      MAX RNG=1148610.00 KM</text>
<text x="649" y="1188">PROJECTION=SIMPLE CYLINDRI    LINE=226   LAT=0.0     INA=43.7     PHA=83.7      EMA=48.5</text>
<text x="649" y="1210">SCALE=270.000 KM/PIXEL        SAMP=133   LON=305.6   S/CAZ=80.7   SUNAZ=-178.0  SPEED=0.9*0.029</text>
<text x="649" y="1232">OBSNOTE=Part five of six observations constituting the Jupiter large cylindrical mosaic</text>
</g>
</svg>
</body></html>
